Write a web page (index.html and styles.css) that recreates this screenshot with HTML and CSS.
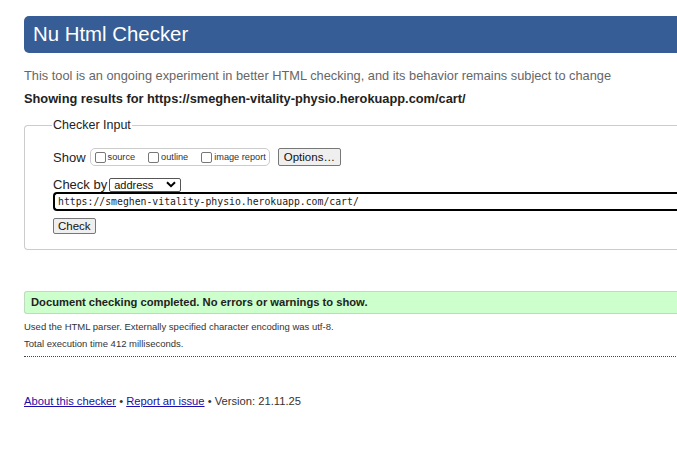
FILE: index.html
```html
<!DOCTYPE html>
<html>
<head>
<meta charset="utf-8">
<link rel="stylesheet" href="styles.css">
</head>
<body>
<div class="page">
  <h1 class="banner">Nu Html Checker</h1>
  <p class="intro">This tool is an ongoing experiment in better HTML checking, and its behavior remains subject to change</p>
  <p class="showing">Showing results for https://smeghen-vitality-physio.herokuapp.com/cart/</p>
  <fieldset class="input-box">
    <legend class="legend">Checker Input</legend>
    <div class="row show-row">
      <span class="label">Show</span>
      <span class="opts">
        <label class="opt"><span class="cb"></span>source</label>
        <label class="opt"><span class="cb"></span>outline</label>
        <label class="opt"><span class="cb"></span>image report</label>
      </span>
      <span class="btn">Options…</span>
    </div>
    <div class="row by-row">
      <span class="label">Check by</span>
      <span class="select">address<svg class="chev" width="10" height="7" viewBox="0 0 10 7"><path d="M1 1.2 L5 5.2 L9 1.2" fill="none" stroke="#000" stroke-width="2"/></svg></span>
    </div>
    <div class="url">https://smeghen-vitality-physio.herokuapp.com/cart/</div>
    <div class="row"><span class="btn check">Check</span></div>
  </fieldset>
  <div class="success">Document checking completed. No errors or warnings to show.</div>
  <p class="detail">Used the HTML parser. Externally specified character encoding was utf-8.</p>
  <p class="detail">Total execution time 412 milliseconds.</p>
  <div class="dots"></div>
  <p class="footer"><a href="#">About this checker</a> • <a href="#">Report an issue</a> • Version: 21.11.25</p>
</div>
</body>
</html>
```
FILE: styles.css
```css
html, body { margin: 0; padding: 0; background: #fff; }
body { font-family: "Liberation Sans", Arial, sans-serif; color: #222; overflow: hidden; }
.page { padding: 16px 0 0 24px; width: 720px; }
.banner {
  margin: 0; height: 37px; background: #365d95; color: #fff;
  font-weight: normal; font-size: 20.4px; line-height: 37px;
  padding-left: 9px; border-radius: 5px 0 0 5px;
}
.intro { margin: 15px 0 0; font-size: 12.8px; color: #666; line-height: 16px; }
.showing { margin: 7px 0 0; font-size: 12.8px; font-weight: bold; color: #222; line-height: 16px; }
.input-box {
  margin: 11px 0 0; padding: 12px 0 15px 28px; border: 1px solid #ccc;
  border-radius: 4px 0 0 4px; border-right: none;
}
.legend { font-size: 12.5px; padding: 0 1px; margin-left: -1px; color: #222; }
.row { display: flex; align-items: center; }
.label { font-size: 13px; color: #222; }
.show-row { margin-top: 4px; }
.opts {
  display: inline-flex; align-items: center; margin-left: 4px;
  border: 1px solid #ccc; border-radius: 5px; height: 16px; padding: 0 3px 0 4px;
}
.opt { display: inline-flex; align-items: center; font-size: 9.2px; color: #333; margin-right: 13px; }
.opt:last-child { margin-right: 0; }
.cb { width: 9px; height: 9px; border: 1px solid #777; border-radius: 2px; margin-right: 2px; background: #fff; }
.btn {
  display: inline-block; font-size: 11.5px; border: 1px solid #777; border-radius: 2px;
  background: #efefef; padding: 1px 5px; margin-left: 8px; color: #111; line-height: 14px;
}
.by-row { margin-top: 11px; }
.select {
  display: inline-flex; align-items: center; justify-content: space-between;
  width: 62px; height: 12px; border: 1px solid #555; border-radius: 2px;
  margin-left: 2px; padding: 0 4px; font-size: 11px; color: #111;
}
.url {
  margin-top: 0; height: 15px; border: 2px solid #000; border-right: none;
  border-radius: 4px 0 0 4px; font-family: "DejaVu Sans Mono", monospace;
  font-size: 9.8px; line-height: 15px; padding-left: 3px; color: #222;
}
.check { margin-left: 0; margin-top: 7px; font-size: 11.5px; padding: 0 4px; }
.success {
  margin-top: 41px; background: #ccffcc; border: 1px solid #bddcbd; border-right: none;
  border-radius: 3px 0 0 3px; height: 21px; line-height: 21px; padding-left: 6px;
  font-size: 11.2px; font-weight: bold; color: #222;
}
.detail { margin: 7px 0 0; font-size: 9.5px; color: #333; line-height: 11px; }
.detail + .detail { margin-top: 6px; }
.dots { margin-top: 7px; border-top: 1px dotted #444; }
.footer { margin: 38px 0 0; font-size: 11.2px; color: #333; }
.footer a { color: #1a0dab; }
```
